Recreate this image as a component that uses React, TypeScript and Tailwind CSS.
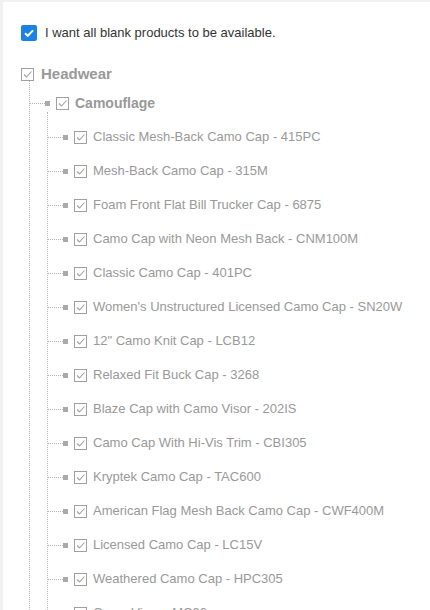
import React from "react";

const items = [
  "Classic Mesh-Back Camo Cap - 415PC",
  "Mesh-Back Camo Cap - 315M",
  "Foam Front Flat Bill Trucker Cap - 6875",
  "Camo Cap with Neon Mesh Back - CNM100M",
  "Classic Camo Cap - 401PC",
  "Women's Unstructured Licensed Camo Cap - SN20W",
  '12" Camo Knit Cap - LCB12',
  "Relaxed Fit Buck Cap - 3268",
  "Blaze Cap with Camo Visor - 202IS",
  "Camo Cap With Hi-Vis Trim - CBI305",
  "Kryptek Camo Cap - TAC600",
  "American Flag Mesh Back Camo Cap - CWF400M",
  "Licensed Camo Cap - LC15V",
  "Weathered Camo Cap - HPC305",
  "Camo Visor - MC90",
];

function GrayCheck() {
  return (
    <span className="flex h-[13px] w-[13px] shrink-0 items-center justify-center border border-[#a0a0a0] bg-white">
      <svg width="11" height="11" viewBox="0 0 11 11">
        <path d="M2 5.5 L4.5 8 L9.5 2.5" fill="none" stroke="#a0a0a0" strokeWidth="1.1" />
      </svg>
    </span>
  );
}

function Connector() {
  return (
    <>
      <span className="w-[15px] border-t border-dotted border-[#b5b5b5]" />
      <span className="h-[5px] w-[5px] shrink-0 bg-[#aaaaaa]" />
    </>
  );
}

export default function App() {
  return (
    <div
      className="h-[610px] w-[430px] overflow-hidden bg-[#f1f1f1] pl-[3px] pt-[2px]"
      style={{ fontFamily: '"Liberation Sans", Arial, sans-serif' }}
    >
      <div className="h-full bg-white pl-[18px] pt-[23px]">
        <label className="flex h-[16px] items-center gap-[8px]">
          <span className="flex h-[16px] w-[16px] items-center justify-center rounded-[2px] bg-[#1a82e2]">
            <svg width="12" height="12" viewBox="0 0 12 12">
              <path d="M2 6.2 L4.8 8.8 L10 3.4" fill="none" stroke="white" strokeWidth="2" />
            </svg>
          </span>
          <span className="text-[13px] text-[#333]">I want all blank products to be available.</span>
        </label>

        <div className="mt-[26px] flex h-[14px] items-center gap-[7px]">
          <GrayCheck />
          <span className="text-[15px] font-bold text-[#999]">Headwear</span>
        </div>

        <div className="ml-[8px] border-l border-dotted border-[#b5b5b5] pt-[13px]">
          <div className="flex h-[18px] items-center">
            <Connector />
            <span className="w-[6px]" />
            <GrayCheck />
            <span className="ml-[6px] text-[14px] font-bold text-[#999]">Camouflage</span>
          </div>
          <div className="ml-[17px] border-l border-dotted border-[#b5b5b5] pt-[8px]">
            {items.map((item, key) => (
              <div key={key} className="flex h-[34px] items-center">
                <Connector />
                <span className="w-[6px]" />
                <GrayCheck />
                <span className="ml-[6px] whitespace-nowrap text-[13px] text-[#999]">{item}</span>
              </div>
            ))}
          </div>
        </div>
      </div>
    </div>
  );
}
